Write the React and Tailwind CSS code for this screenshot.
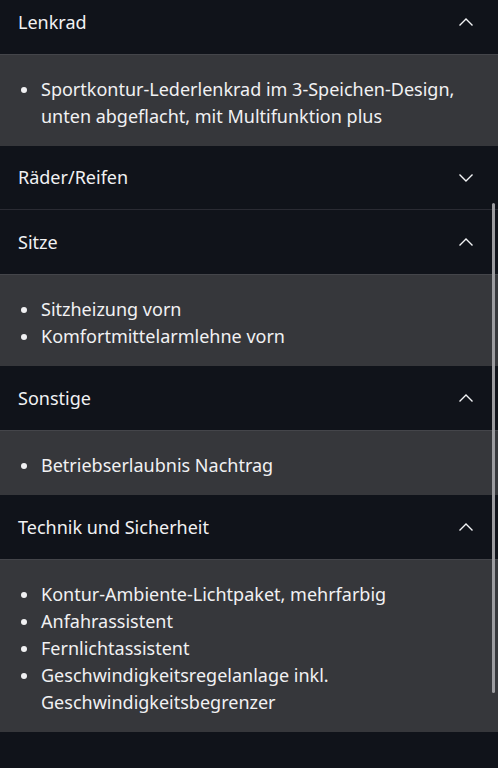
import React from 'react';

const sections = [
  { title: 'Lenkrad', open: true, items: ['Sportkontur-Lederlenkrad im 3-Speichen-Design, unten abgeflacht, mit Multifunktion plus'] },
  { title: 'Räder/Reifen', open: false, items: [] },
  { title: 'Sitze', open: true, items: ['Sitzheizung vorn', 'Komfortmittelarmlehne vorn'] },
  { title: 'Sonstige', open: true, items: ['Betriebserlaubnis Nachtrag'] },
  {
    title: 'Technik und Sicherheit',
    open: true,
    items: [
      'Kontur-Ambiente-Lichtpaket, mehrfarbig',
      'Anfahrassistent',
      'Fernlichtassistent',
      'Geschwindigkeitsregelanlage inkl. Geschwindigkeitsbegrenzer',
    ],
  },
];

function Chevron({ up }) {
  return (
    <svg width="16" height="10" viewBox="0 0 16 10" fill="none" className="text-gray-100">
      {up ? (
        <path d="M1.5 8.5 L8 2 L14.5 8.5" stroke="currentColor" strokeWidth="1.4" />
      ) : (
        <path d="M1.5 1.5 L8 8 L14.5 1.5" stroke="currentColor" strokeWidth="1.4" />
      )}
    </svg>
  );
}

function Section({ title, open, items, border }) {
  return (
    <div>
      <div className={`h-[64px] flex items-center justify-between pl-[18px] pr-[24px] ${border ? 'border-b border-[#2a2b33]' : ''}`}>
        <span className="text-[18px] text-[#f1f1f3]">{title}</span>
        <Chevron up={open} />
      </div>
      {open && (
        <ul className="bg-[#36373b] border-t border-[#44454a] pt-[21px] pb-[16px] pl-[21px] pr-[24px]">
          {items.map((item) => (
            <li key={item} className="flex text-[18px] leading-[27px] text-[#f1f1f3]">
              <span className="w-[20px] shrink-0 flex pt-[11px]">
                <span className="w-[6px] h-[6px] rounded-full bg-[#f1f1f3]"></span>
              </span>
              <span>{item}</span>
            </li>
          ))}
        </ul>
      )}
    </div>
  );
}

export default function App() {
  return (
    <div
      className="relative w-[498px] h-[768px] overflow-hidden bg-[#10131a]"
      style={{ fontFamily: '"Noto Sans", "Open Sans", sans-serif' }}
    >
      <div className="-mt-[10px]">
        {sections.map((s, i) => (
          <Section key={s.title} {...s} border={!s.open} />
        ))}
      </div>
      <div className="absolute right-[3px] top-[203px] w-[3px] h-[490px] rounded-full bg-[#9c9ca0]"></div>
    </div>
  );
}
